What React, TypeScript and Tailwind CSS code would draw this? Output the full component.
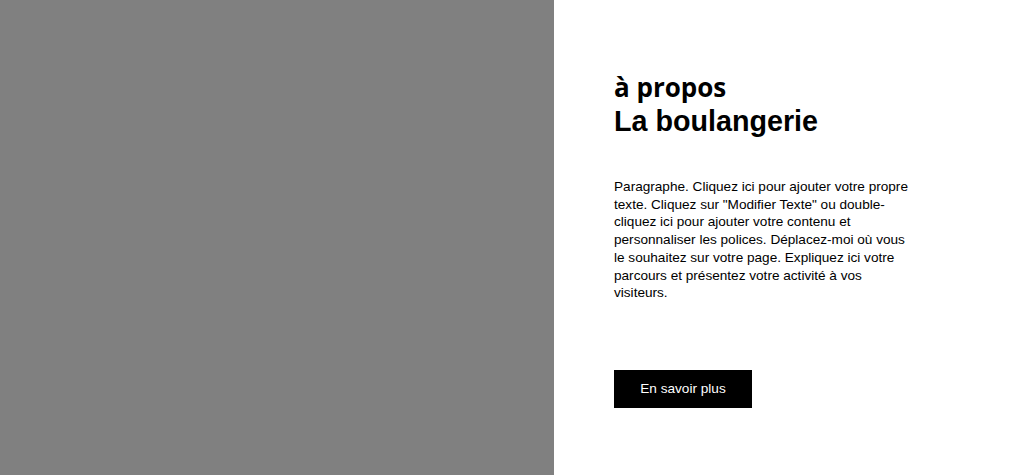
import React from "react";

const App: React.FC = () => {
  return (
    <div className="flex h-[475px] w-full overflow-hidden bg-white">
      {/* image placeholder */}
      <div className="h-full w-[554px] shrink-0 bg-[#808080]" />

      <div className="flex-1 pl-[60px] pt-[70px]">
        <h2 className="text-[26px] leading-[34px] font-bold text-black [font-family:'Open_Sans',sans-serif]">
          à propos
        </h2>
        <h1 className="text-[28.7px] leading-[34px] font-bold text-black [font-family:'Liberation_Sans',Arial,sans-serif]">
          La boulangerie
        </h1>

        <p className="mt-[40px] w-[300px] text-[13.6px] leading-[17.7px] text-black [font-family:'Liberation_Sans',Arial,sans-serif]">
          Paragraphe. Cliquez ici pour ajouter votre propre texte. Cliquez sur
          "Modifier Texte" ou double-cliquez ici pour ajouter votre contenu et
          personnaliser les polices. Déplacez-moi où vous le souhaitez sur votre
          page. Expliquez ici votre parcours et présentez votre activité à vos
          visiteurs.
        </p>

        <button className="mt-[68px] flex h-[38px] w-[138px] items-center justify-center bg-black text-[13.6px] text-white [font-family:'Liberation_Sans',Arial,sans-serif]">
          En savoir plus
        </button>
      </div>
    </div>
  );
};

export default App;
